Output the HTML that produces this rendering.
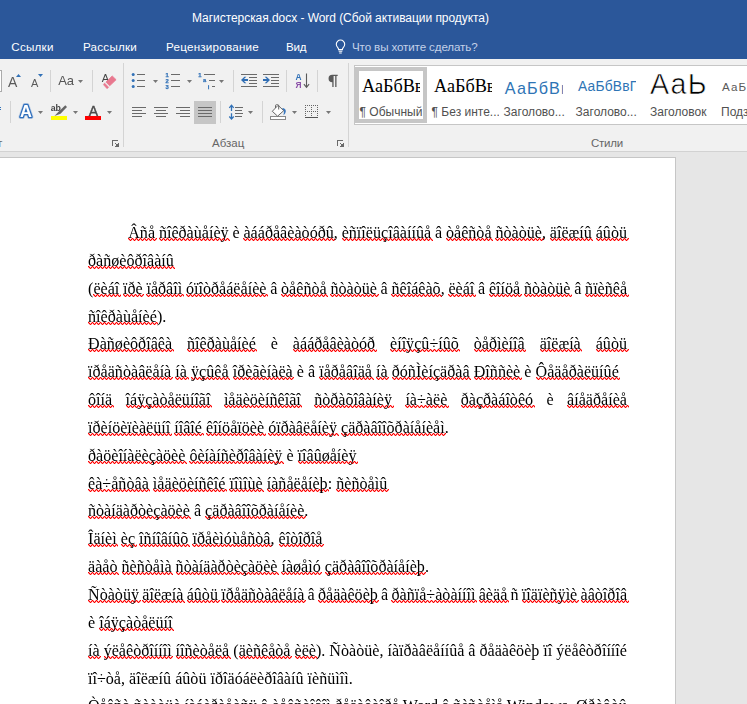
<!DOCTYPE html>
<html lang="ru"><head><meta charset="utf-8"><title>Магистерская.docx - Word</title>
<style>
html,body{margin:0;padding:0}
body{width:747px;height:704px;overflow:hidden;position:relative;background:#e6e6e6;font-family:"Liberation Sans",sans-serif;font-size:12px}
#top{position:absolute;left:0;top:0;width:747px;height:59px;background:#2b579a;color:#fff}
#title{position:absolute;left:192px;top:10px;line-height:16px;white-space:nowrap;font-size:12px;letter-spacing:-0.05px}
.tab{position:absolute;top:39px;line-height:16px;white-space:nowrap;font-size:11.6px;letter-spacing:.25px}
#ribbon{position:absolute;left:0;top:59px;width:747px;height:92px;background:#f1f1f1;border-bottom:1px solid #d2d2d2}
#ribsvg{position:absolute;left:0;top:0;will-change:transform}
.glabel{position:absolute;top:136px;line-height:14px;color:#666;font-size:11.5px;white-space:nowrap}
#gallery{position:absolute;left:354px;top:65px;width:400px;height:58px;background:#fff;border:1px solid #c6c6c6}
.sty{position:absolute;top:0;height:58px;width:72px;overflow:hidden}
.sty .smp{position:absolute;left:6px;width:59px;overflow:hidden;white-space:nowrap;text-indent:1px}
.sty .lbl{position:absolute;left:4.600px;top:39px;line-height:14px;color:#505050;font-size:12px;white-space:nowrap}
.sty.sel:before{content:"";position:absolute;left:0;top:1px;width:64px;height:48px;border:4px solid #c6c6c6}
#page{position:absolute;left:-1px;top:157px;width:675px;height:600px;background:#fff;border:1px solid #c6c6c6}
#doc{will-change:transform;position:absolute;left:88px;top:218.56px;width:560px;font-family:"Liberation Serif",serif;font-size:16.12px;line-height:28px;color:#000}
.ln{position:absolute;white-space:nowrap;height:28px}
u{text-decoration:none;padding-bottom:2px;padding-right:1.6px;margin-right:-1.6px;
background-image:linear-gradient(90deg,#f00 25%,rgba(255,0,0,.35) 25%,rgba(255,0,0,.35) 50%,transparent 50%,transparent 75%,rgba(255,0,0,.35) 75%),linear-gradient(90deg,rgba(255,0,0,.35) 50%,#f00 50%),linear-gradient(90deg,#f00 25%,rgba(255,0,0,.35) 25%,rgba(255,0,0,.35) 50%,transparent 50%,transparent 75%,rgba(255,0,0,.35) 75%);
background-size:4px 1px,2px 1px,4px 1px;background-repeat:repeat-x;background-position:0 14px,0 15px,2px 16px}
</style></head><body>
<div id="top">
<div id="title">Магистерская.docx - Word (Сбой активации продукта)</div>
<div class="tab" style="left:11.300px">Ссылки</div>
<div class="tab" style="left:83px">Рассылки</div>
<div class="tab" style="left:166px">Рецензирование</div>
<div class="tab" style="left:286px;letter-spacing:-.2px">Вид</div>
<div class="tab" style="left:352px;color:#c3d1e8;letter-spacing:-0.12px">Что вы хотите сделать?</div>
</div>
<div id="ribbon"></div>
<div id="gallery">
<div class="sty sel" style="left:0"><div class="smp" style="top:8px;font:18.2px/24px 'Liberation Serif',serif;color:#000">АаБбВв</div><div class="lbl">¶ Обычный</div></div>
<div class="sty" style="left:72px"><div class="smp" style="top:8px;font:18.2px/24px 'Liberation Serif',serif;color:#000">АаБбВв</div><div class="lbl">¶ Без инте...</div></div>
<div class="sty" style="left:144px"><div class="smp" style="top:10px;font:16.2px/24px 'Liberation Sans',sans-serif;color:#2e74b5;letter-spacing:1.1px;margin-left:-1.2px">АаБбВв</div><div class="lbl">Заголово...</div></div>
<div class="sty" style="left:216px"><div class="smp" style="top:10.300px;font:13.8px/22px 'Liberation Sans',sans-serif;color:#2e74b5;letter-spacing:.2px">АаБбВвГ</div><div class="lbl">Заголово...</div></div>
<div class="sty" style="left:288px"><div class="smp" style="top:.4px;font:28.6px/36px 'Liberation Sans',sans-serif;color:#000;letter-spacing:1.2px;-webkit-text-stroke:.6px #fff">АаЬ</div><div class="lbl" style="left:7px">Заголовок</div></div>
<div class="sty" style="left:360px"><div class="smp" style="top:12px;font:11.6px/18px 'Liberation Sans',sans-serif;color:#5a5a5a;letter-spacing:1.1px">АаБбВв</div><div class="lbl" style="left:6px">Подзаголо...</div></div>
</div>
<div class="glabel" style="left:-35.5px">Шрифт</div>
<div class="glabel" style="left:212px">Абзац</div>
<div class="glabel" style="left:591px;letter-spacing:-.25px">Стили</div>
<svg id="ribsvg" width="747" height="152" viewBox="0 0 747 152" font-family="Liberation Sans, sans-serif">
<g shape-rendering="crispEdges">
<!-- font size combobox edge -->
<rect x="-5" y="70.5" width="6.5" height="21" fill="#fff" stroke="#ababab"/>
<!-- separators -->
<rect x="50" y="70" width="1" height="22" fill="#d4d4d4"/>
<rect x="92" y="70" width="1" height="22" fill="#d4d4d4"/>
<rect x="10" y="101" width="1" height="22" fill="#d4d4d4"/>
<rect x="123" y="63" width="1" height="84" fill="#d4d4d4"/>
<rect x="233" y="70" width="1" height="22" fill="#d4d4d4"/>
<rect x="286" y="70" width="1" height="22" fill="#d4d4d4"/>
<rect x="317" y="70" width="1" height="22" fill="#d4d4d4"/>
<rect x="220" y="101" width="1" height="22" fill="#d4d4d4"/>
<rect x="262" y="101" width="1" height="22" fill="#d4d4d4"/>
<rect x="348" y="63" width="1" height="84" fill="#d4d4d4"/>
<!-- justify selected bg -->
<rect x="194" y="101" width="22" height="23" fill="#c6c6c6"/>
<!-- bullets lines -->
<g fill="#6a6a6a">
<rect x="137" y="74" width="8" height="1"/><rect x="137" y="80" width="8" height="1"/><rect x="137" y="86" width="8" height="1"/>
<rect x="171" y="74" width="9" height="1"/><rect x="171" y="80" width="9" height="1"/><rect x="171" y="86" width="9" height="1"/>
<rect x="204" y="74" width="11" height="1"/><rect x="209" y="80" width="6" height="1"/><rect x="212" y="86" width="3" height="1"/>
<!-- align left -->
<rect x="132" y="107" width="14" height="1"/><rect x="132" y="110" width="10" height="1"/><rect x="132" y="113" width="14" height="1"/><rect x="132" y="116" width="10" height="1"/>
<!-- center -->
<rect x="154" y="107" width="14" height="1"/><rect x="156" y="110" width="10" height="1"/><rect x="154" y="113" width="14" height="1"/><rect x="156" y="116" width="10" height="1"/>
<!-- right -->
<rect x="176" y="107" width="14" height="1"/><rect x="180" y="110" width="10" height="1"/><rect x="176" y="113" width="14" height="1"/><rect x="180" y="116" width="10" height="1"/>
<!-- justify -->
<rect x="198" y="107" width="14" height="1"/><rect x="198" y="110" width="14" height="1"/><rect x="198" y="113" width="14" height="1"/><rect x="198" y="116" width="14" height="1"/>
<!-- line spacing lines -->
<rect x="235" y="107" width="8" height="1"/><rect x="235" y="110" width="7" height="1"/><rect x="235" y="113" width="8" height="1"/><rect x="235" y="116" width="7" height="1"/>
<!-- decrease indent -->
<rect x="241" y="74" width="16" height="1"/><rect x="249" y="77" width="8" height="1"/><rect x="249" y="80" width="8" height="1"/><rect x="249" y="83" width="8" height="1"/><rect x="241" y="86" width="16" height="1"/>
<!-- increase indent -->
<rect x="263" y="74" width="16" height="1"/><rect x="271" y="77" width="8" height="1"/><rect x="271" y="80" width="8" height="1"/><rect x="271" y="83" width="8" height="1"/><rect x="263" y="86" width="16" height="1"/>
</g>
<!-- highlight / font color bars -->
<rect x="51" y="116" width="16" height="4" fill="#ffff00"/>
<rect x="85" y="116" width="16" height="4" fill="#ff0000"/>
<!-- shading bar -->
<rect x="270.5" y="116.5" width="15" height="3" fill="#fff" stroke="#8a8a8a"/>
</g>
<!-- dropdown arrows -->
<g fill="#777">
<path d="M78 80h5l-2.5 3z"/><path d="M38 111h5l-2.5 3z"/><path d="M73 111h5l-2.5 3z"/><path d="M107 111h5l-2.5 3z"/>
<path d="M153 80h5l-2.5 3z"/><path d="M187 80h5l-2.5 3z"/><path d="M219 80h5l-2.5 3z"/>
<path d="M248 111h5l-2.5 3z"/><path d="M292 111h5l-2.5 3z"/><path d="M326 111h5l-2.5 3z"/>
</g>
<!-- grow/shrink font -->
<text x="8" y="87" font-size="14" fill="#5a5a5a">A</text>
<path d="M16 77l2.5-3l2.5 3z" fill="#3171b7"/>
<text x="31" y="87" font-size="11" fill="#5a5a5a">A</text>
<path d="M38 74h5l-2.5 3z" fill="#3171b7"/>
<text x="58.200" y="85.100" font-size="13" fill="#555">Aa</text>
<!-- clear formatting -->
<text x="101.700" y="81.800" font-size="11" fill="#444">A</text>
<path d="M112.200 75.900l3.900 3.800l-6.400 6.100l-3.700-3.700z" fill="#e8788f" stroke="#e8788f" stroke-width=".8" stroke-linejoin="round"/>
<path d="M104.500 83.100l4.200 4.100l-1.600 1.600l-3.700-4.100z" fill="#e8788f" stroke="#e8788f" stroke-width=".5" stroke-linejoin="round"/>
<!-- text effects -->
<text x="20" y="117" font-size="16.5" font-weight="bold" fill="#fff" stroke="#3b78c3" stroke-opacity=".25" stroke-width="4" paint-order="stroke" stroke-linejoin="round">A</text><text x="20" y="117" font-size="16.5" font-weight="bold" fill="#fff" stroke="#2f6fbd" stroke-width="2.5" paint-order="stroke" stroke-linejoin="round">A</text>
<!-- highlight -->
<text x="50.700" y="111" font-size="8.800" font-weight="bold" fill="#454545">ab</text>
<path d="M54.5 116l4-4.200l6.800-6.600l1.700 1.700l-6.500 6.800z" fill="#666"/>
<!-- font color A -->
<text x="88.800" y="116" font-size="14" fill="#4c4c4c" stroke="#4c4c4c" stroke-width=".4">A</text>
<!-- bullets -->
<g fill="#3171b7"><circle cx="133.2" cy="74.5" r="1.5"/><circle cx="133.2" cy="80.5" r="1.5"/><circle cx="133.2" cy="86.5" r="1.5"/></g>
<!-- numbering -->
<g fill="#3171b7" stroke="#3171b7" stroke-width=".25" font-size="5.8" font-weight="bold"><text x="165.600" y="77">1</text><text x="165.600" y="82.800">2</text><text x="165.600" y="88.800">3</text>
<text x="198.300" y="77">1</text><text x="203" y="82.400">a</text><text x="207.800" y="88.800">i</text></g>
<!-- indent arrows -->
<path d="M241 80l3.400-3.300h1.900l-2.300 2.300h4v2h-4l2.300 2.300h-1.900z" fill="#2f6db3"/>
<path d="M270 80l-3.400-3.300h-1.900l2.300 2.300h-4v2h4l-2.300 2.300h1.900z" fill="#2f6db3"/>
<!-- sort -->
<text x="295.600" y="79.500" font-size="8.400" font-weight="bold" fill="#3171b7">A</text>
<text x="295.400" y="87.600" font-size="8.400" font-weight="bold" fill="#8b4fa8">Я</text>
<path d="M306.500 73.500v13.800m-2.600-3.200l2.600 3.200l2.600-3.200" stroke="#5a5a5a" stroke-width="1.100" fill="none"/>
<!-- pilcrow -->
<path d="M337.700 74.700v1.200h-1.200v11.100h-1.300v-11.100h-1.600v11.100h-1.300v-4.800a3.750 3.750 0 0 1 0-7.500z" fill="#5a5a5a"/>
<!-- line spacing arrows -->
<path d="M231.500 105.200v5.900M229.300 107.800l2.200-2.600l2.200 2.600M231.500 113.200v5.900M229.300 116.500l2.200 2.600l2.200-2.600" stroke="#3171b7" stroke-width="1.300" fill="none"/>
<!-- shading bucket -->
<path d="M282.100 108.100c2.300.2 4 1.400 3.700 3.300c-.2 1.500-1.100 2.900-2.400 3.900c.5-1.700.6-3 .3-4.300z" fill="#3a78bf"/>
<path d="M272.300 111.300l5.800-6l5.600 5.400l-6.100 5.500z" fill="#fff" stroke="#666" stroke-width="1"/>
<path d="M275.500 108v-2.300a1 1 0 0 1 1-1h1.200a1 1 0 0 1 1 1v3.800" fill="none" stroke="#666" stroke-width="1"/>
<!-- borders -->
<g stroke="#666" stroke-width="1" stroke-dasharray="1 1" shape-rendering="crispEdges" fill="none">
<path d="M305 105.500h13M305 111.500h13M305.500 105v12M311.500 105v12M317.500 105v12"/></g>
<rect x="305" y="117" width="13" height="1" fill="#555" shape-rendering="crispEdges"/>
<rect x="0" y="107" width="1" height="1" fill="#3171b7"/><rect x="0" y="109" width="1" height="1" fill="#3171b7"/>
<!-- dialog launchers -->
<g fill="#6a6a6a" shape-rendering="crispEdges"><rect x="112" y="140" width="6" height="1"/><rect x="112" y="140" width="1" height="6"/><rect x="115" y="143" width="1" height="1"/><rect x="116" y="144" width="1" height="1"/><rect x="118" y="143" width="1" height="4"/><rect x="117" y="144" width="1" height="3"/><rect x="116" y="145" width="1" height="2"/><rect x="115" y="146" width="1" height="1"/>
<rect x="337" y="140" width="6" height="1"/><rect x="337" y="140" width="1" height="6"/><rect x="340" y="143" width="1" height="1"/><rect x="341" y="144" width="1" height="1"/><rect x="343" y="143" width="1" height="4"/><rect x="342" y="144" width="1" height="3"/><rect x="341" y="145" width="1" height="2"/><rect x="340" y="146" width="1" height="1"/></g>
<!-- lightbulb -->
<g stroke="#fff" stroke-width="1.1" fill="none"><path d="M337.600 47.300a4.200 4.200 0 1 1 5.800 0c-.7.800-1 1.500-1 2.300h-3.800c0-.8-.3-1.500-1-2.300z"/><path d="M338.700 51.300h3.600M339.200 53h2.600"/></g>

</svg>
<div id="page"></div>
<div id="doc">
<div class="ln" style="left:40.20px;top:0px;letter-spacing:0.0px;word-spacing:-0.198px"><u>Âñå</u> <u>ñîêðàùåíèÿ</u> è <u>àááðåâèàòóðû</u>, <u>èñïîëüçîâàííûå</u> â <u>òåêñòå</u> <u>ñòàòüè</u>, <u>äîëæíû</u> <u>áûòü</u></div>
<div class="ln" style="left:0.00px;top:28px;letter-spacing:0.0px"><u>ðàñøèôðîâàíû</u></div>
<div class="ln" style="left:0.00px;top:56px;letter-spacing:0.0px;word-spacing:-0.320px">(<u>ëèáî</u> <u>ïðè</u> <u>ïåðâîì</u> <u>óïîòðåáëåíèè</u> â <u>òåêñòå</u> <u>ñòàòüè</u> â <u>ñêîáêàõ</u>, <u>ëèáî</u> â <u>êîíöå</u> <u>ñòàòüè</u> â <u>ñïèñêå</u></div>
<div class="ln" style="left:0.00px;top:84px;letter-spacing:0.0px"><u>ñîêðàùåíèé</u>).</div>
<div class="ln" style="left:0.00px;top:111px;letter-spacing:0.0px;word-spacing:10.872px"><u>Ðàñøèôðîâêà</u> <u>ñîêðàùåíèé</u> è <u>àááðåâèàòóð</u> <u>èíîÿçû÷íûõ</u> <u>òåðìèíîâ</u> <u>äîëæíà</u> <u>áûòü</u></div>
<div class="ln" style="left:0.00px;top:139px;letter-spacing:0.0099px"><u>ïðåäñòàâëåíà</u> <u>íà</u> <u>ÿçûêå</u> <u>îðèãèíàëà</u> è â <u>ïåðåâîäå</u> <u>íà</u> <u>ðóñÌèíçäðàâ</u> <u>Ðîññèè</u> è <u>Ôåäåðàëüíûé</u></div>
<div class="ln" style="left:0.00px;top:167px;letter-spacing:0.0px;word-spacing:9.345px"><u>ôîíä</u> <u>îáÿçàòåëüíîãî</u> <u>ìåäèöèíñêîãî</u> <u>ñòðàõîâàíèÿ</u> <u>íà÷àëè</u> <u>ðàçðàáîòêó</u> è <u>âíåäðåíèå</u></div>
<div class="ln" style="left:0.00px;top:195px;letter-spacing:-0.0053px"><u>ïðèíöèïèàëüíî</u> <u>íîâîé</u> <u>êîíöåïöèè</u> <u>óïðàâëåíèÿ</u> <u>çäðàâîîõðàíåíèåì</u>.</div>
<div class="ln" style="left:0.00px;top:223px;letter-spacing:-0.0065px"><u>ðàöèîíàëèçàöèè</u> <u>ôèíàíñèðîâàíèÿ</u> è <u>ïîâûøåíèÿ</u></div>
<div class="ln" style="left:0.00px;top:251px;letter-spacing:0.0122px"><u>êà÷åñòâà</u> <u>ìåäèöèíñêîé</u> <u>ïîìîùè</u> <u>íàñåëåíèþ</u>: <u>ñèñòåìû</u></div>
<div class="ln" style="left:0.00px;top:278px;letter-spacing:-0.0046px"><u>ñòàíäàðòèçàöèè</u> â <u>çäðàâîîõðàíåíèè</u>.</div>
<div class="ln" style="left:0.00px;top:306px;letter-spacing:0.0122px"><u>Îäíèì</u> <u>èç</u> <u>îñíîâíûõ</u> <u>ïðåèìóùåñòâ</u>, <u>êîòîðîå</u></div>
<div class="ln" style="left:0.00px;top:334px;letter-spacing:-0.0082px"><u>äàåò</u> <u>ñèñòåìà</u> <u>ñòàíäàðòèçàöèè</u> <u>íàøåìó</u> <u>çäðàâîîõðàíåíèþ</u>.</div>
<div class="ln" style="left:0.00px;top:362px;letter-spacing:0.0px;word-spacing:-0.806px"><u>Ñòàòüÿ</u> <u>äîëæíà</u> <u>áûòü</u> <u>ïðåäñòàâëåíà</u> â <u>ðåäàêöèþ</u> â <u>ðàñïå÷àòàííîì</u> <u>âèäå</u> ñ <u>ïîäïèñÿìè</u> <u>àâòîðîâ</u></div>
<div class="ln" style="left:0.00px;top:390px;letter-spacing:0.0px">è <u>îáÿçàòåëüíî</u></div>
<div class="ln" style="left:0.00px;top:418px;letter-spacing:0.0px;word-spacing:-0.044px"><u>íà</u> <u>ýëåêòðîííîì</u> <u>íîñèòåëå</u> (<u>äèñêåòå</u> <u>èëè</u>). Ñòàòüè, íàïðàâëåííûå â ðåäàêöèþ ïî ýëåêòðîííîé</div>
<div class="ln" style="left:0.00px;top:446px;letter-spacing:0.0px">ïî÷òå, äîëæíû áûòü ïðîäóáëèðîâàíû ïèñüìîì.</div>
<div class="ln" style="left:0.00px;top:473px;letter-spacing:0.0px;word-spacing:-0.115px">Òåêñò ñòàòüè íàáèðàåòñÿ â òåêñòîâîì ðåäàêòîðå Word â ñèñòåìå Windows. Øðèôòû</div>
</div>
</body></html>
